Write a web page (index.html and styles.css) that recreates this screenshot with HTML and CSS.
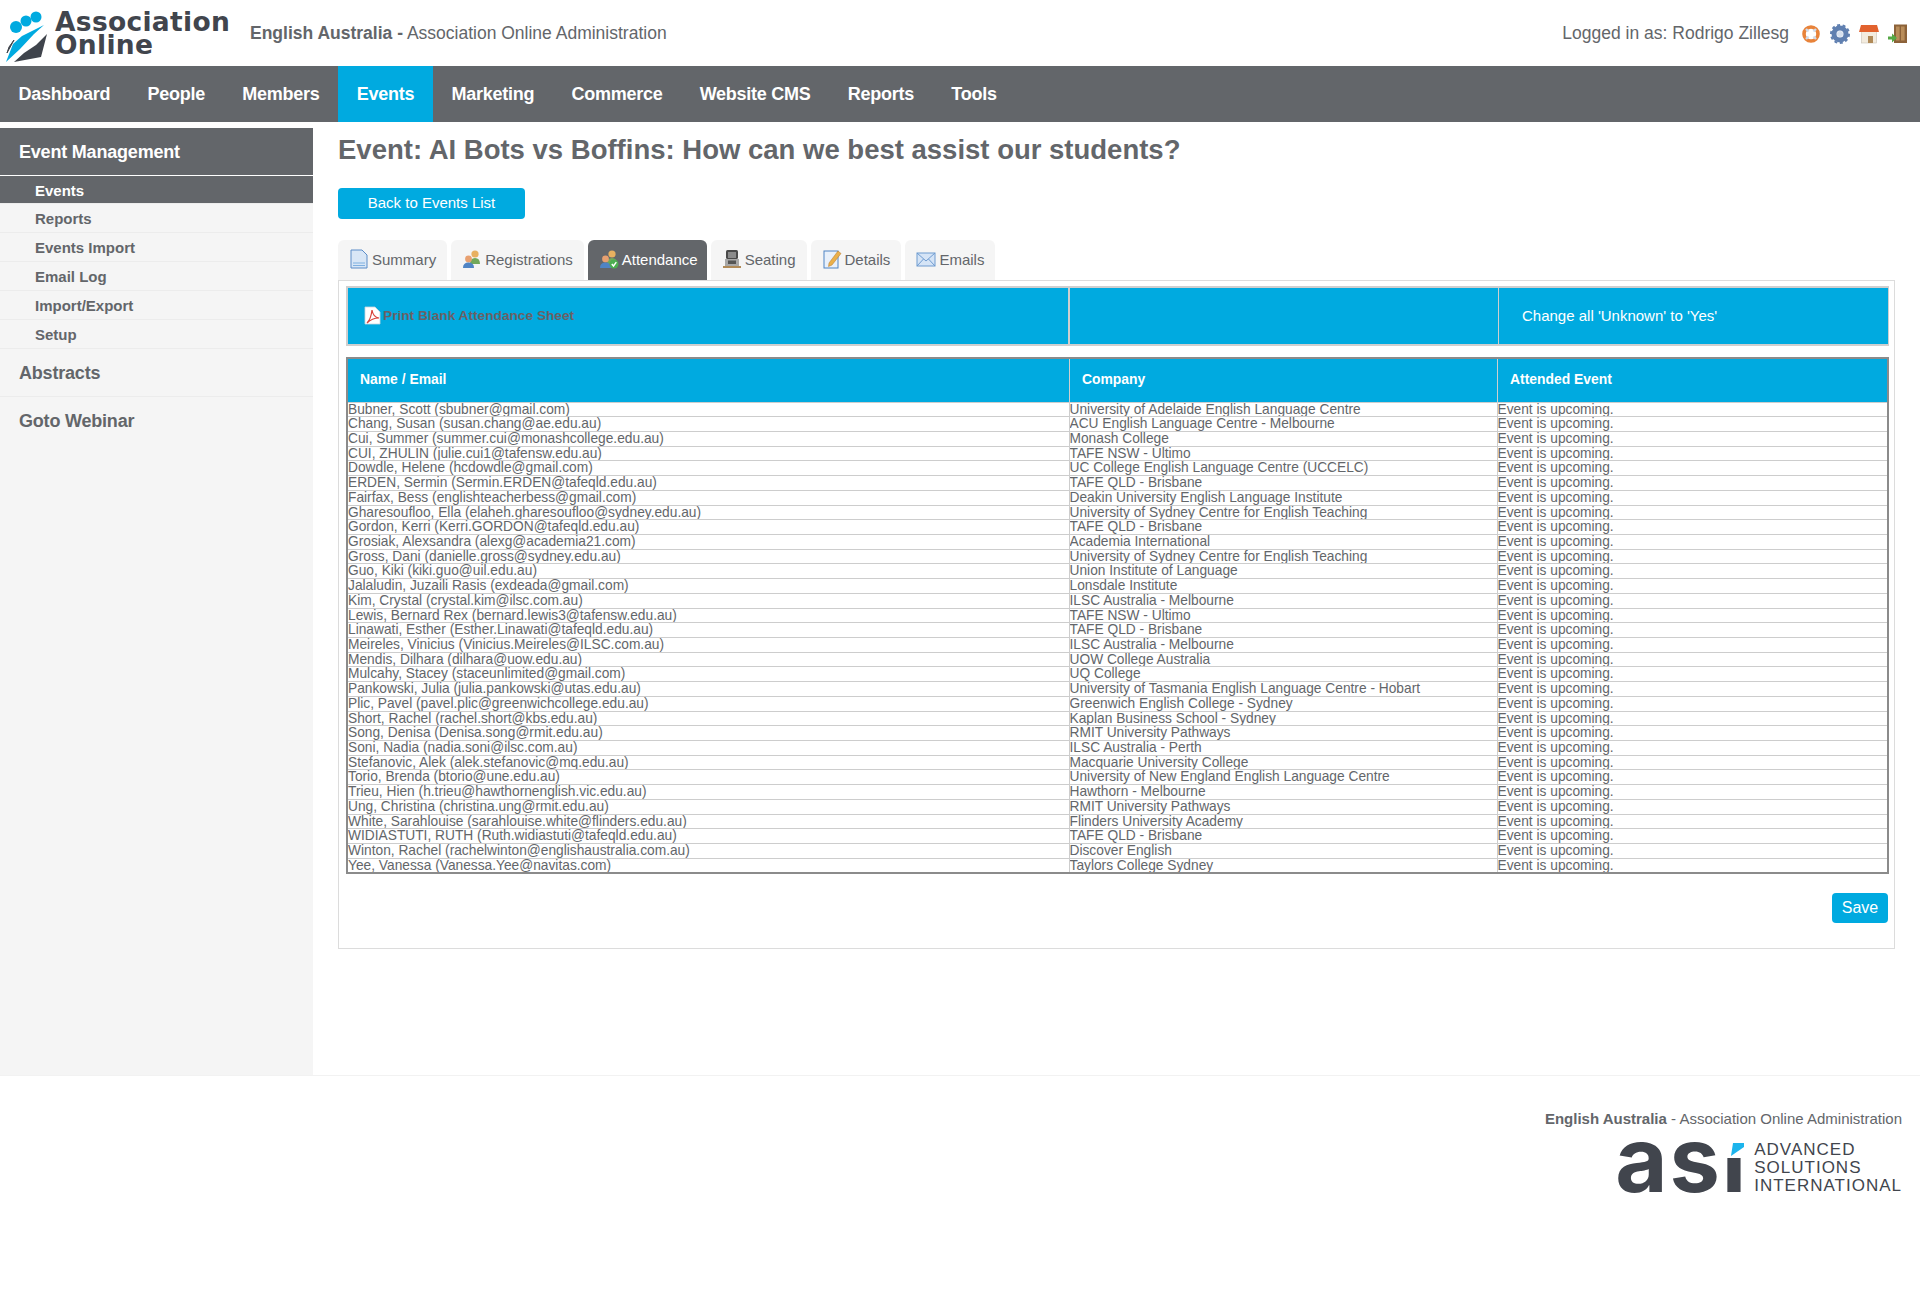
FILE: index.html
```html
<!DOCTYPE html>
<html lang="en">
<head>
    <meta charset="UTF-8">
    <title>Event Attendance</title>
    <link rel="stylesheet" href="styles.css">
</head>
<body>
    <div class="header">
        <div class="logo">
            <svg class="logo-mark" width="48" height="56" viewBox="0 0 48 56">
                <circle cx="16" cy="20" r="6" fill="#00aae0"/>
                <circle cx="26" cy="14" r="5.5" fill="#00aae0"/>
                <circle cx="36" cy="10" r="5.5" fill="#00aae0"/>
                <path d="M44 18 L34 27 L20 42 L6 55 L13 37 L22 29 Z" fill="#00aae0"/>
                <path d="M47 27 L41 50 L14 55 L24 46 L36 38 Z" fill="#3f444c"/>
                <path d="M14 33 L7 46 L9 40 Z" fill="#3f444c" stroke="#3f444c"/>
            </svg>
            <div class="logo-text">Association<br>Online</div>
        </div>
        <div class="site-title"><b>English Australia -</b> Association Online Administration</div>
        <div class="user-area">
            <span class="logged-in">Logged in as: Rodrigo Zillesg</span>
            <svg class="top-icon" width="20" height="20" viewBox="0 0 20 20">
                <circle cx="10" cy="10" r="7" fill="none" stroke="#e8833a" stroke-width="3.6"/>
                <path d="M5 5 L7.5 7.5 M15 5 L12.5 7.5 M5 15 L7.5 12.5 M15 15 L12.5 12.5" stroke="#cfdcec" stroke-width="2.4"/>
            </svg>
            <svg class="top-icon" width="20" height="20" viewBox="0 0 20 20">
                <circle cx="10" cy="10" r="6" fill="none" stroke="#5f7fb0" stroke-width="5"/>
                <circle cx="10" cy="10" r="9" fill="none" stroke="#5f7fb0" stroke-width="2" stroke-dasharray="3 2.6"/>
                <circle cx="10" cy="10" r="3" fill="#d6e0ee"/>
            </svg>
            <svg class="top-icon" width="20" height="20" viewBox="0 0 20 20">
                <rect x="2.5" y="7" width="15" height="12" fill="#f3ecdf" stroke="#c9c2b4" stroke-width=".6"/>
                <path d="M0 8 L2 1 H18 L20 8 Z" fill="#e2622e"/>
                <rect x="9" y="12" width="5" height="7" fill="#b08a58"/>
            </svg>
            <svg class="top-icon" width="20" height="20" viewBox="0 0 20 20">
                <rect x="6" y="0.5" width="13" height="18.5" fill="#8c6239"/>
                <rect x="8" y="2.5" width="3.6" height="14" fill="#b98d5a"/>
                <rect x="13" y="2.5" width="3.6" height="14" fill="#b98d5a"/>
                <path d="M0 12.5 H4 V9.5 L9 14 L4 18.5 V15.5 H0 Z" fill="#55a845"/>
            </svg>
        </div>
    </div>

    <div class="nav">
        <a>Dashboard</a>
        <a>People</a>
        <a>Members</a>
        <a class="active">Events</a>
        <a>Marketing</a>
        <a>Commerce</a>
        <a>Website CMS</a>
        <a>Reports</a>
        <a>Tools</a>
    </div>

    <div class="main">
        <div class="sidebar">
            <div class="side-head">Event Management</div>
            <a class="side-item current">Events</a>
            <a class="side-item">Reports</a>
            <a class="side-item">Events Import</a>
            <a class="side-item">Email Log</a>
            <a class="side-item">Import/Export</a>
            <a class="side-item">Setup</a>
            <div class="side-group">Abstracts</div>
            <div class="side-group">Goto Webinar</div>
        </div>

        <div class="content">
            <h1>Event: AI Bots vs Boffins: How can we best assist our students?</h1>
            <a class="btn btn-back">Back to Events List</a>

            <div class="tabs">
                <a class="tab">
                    <svg width="20" height="20" viewBox="0 0 20 20"><path d="M2 1 H13 L18 6 V19 H2 Z" fill="#d8e6f6" stroke="#5b8cc8"/><path d="M4 14 H16 M4 16.5 H16" stroke="#7fb0e0"/></svg>
                    Summary
                </a>
                <a class="tab">
                    <svg width="20" height="20" viewBox="0 0 20 20"><circle cx="13" cy="5" r="3.6" fill="#e8b060"/><path d="M8 15 Q8 9 13 9 Q18 9 18 15 Z" fill="#72a85a"/><circle cx="6.5" cy="10" r="3.4" fill="#e8a070"/><path d="M1 19 Q1 13.5 6.5 13.5 Q12 13.5 12 19 Z" fill="#4f84c4"/></svg>
                    Registrations
                </a>
                <a class="tab selected">
                    <svg width="20" height="20" viewBox="0 0 20 20"><circle cx="13" cy="5" r="3.6" fill="#e8b060"/><path d="M8 15 Q8 9 13 9 Q18 9 18 15 Z" fill="#72a85a"/><circle cx="6.5" cy="10" r="3.4" fill="#e8a070"/><path d="M1 19 Q1 13.5 6.5 13.5 Q12 13.5 12 19 Z" fill="#4f84c4"/><circle cx="15" cy="15" r="4.5" fill="#4caf50"/><path d="M12.8 15 L14.5 17 L17.3 13.2" fill="none" stroke="#fff" stroke-width="1.4"/></svg>
                    Attendance
                </a>
                <a class="tab">
                    <svg width="20" height="20" viewBox="0 0 20 20"><rect x="4" y="1" width="12" height="9" rx="1.5" fill="#4a4a4a"/><rect x="6" y="3" width="8" height="6" fill="#8b8b8b"/><rect x="3" y="10" width="14" height="7" fill="#a8a8a8"/><rect x="6" y="11.5" width="8" height="3.5" fill="#555"/><rect x="1" y="17" width="18" height="2" fill="#b08a58"/></svg>
                    Seating
                </a>
                <a class="tab">
                    <svg width="20" height="20" viewBox="0 0 20 20"><rect x="2" y="2" width="14" height="17" fill="#e8f0fa" stroke="#4f84c4"/><path d="M7 14 L16 2 L19 4.5 L10 16 L6.5 17.5 Z" fill="#eab04a" stroke="#b5772a" stroke-width=".5"/></svg>
                    Details
                </a>
                <a class="tab">
                    <svg width="20" height="20" viewBox="0 0 20 20"><rect x="1" y="4" width="18" height="13" fill="#d5e4f6" stroke="#6f9bd0"/><path d="M1 4 L10 12 L19 4 M1 17 L7.5 10 M19 17 L12.5 10" fill="none" stroke="#6f9bd0"/></svg>
                    Emails
                </a>
            </div>

            <div class="panel">
                <table class="action-table">
                    <tr>
                        <td class="col-name">
                            <a class="print-link">
                                <svg width="17" height="19" viewBox="0 0 17 19"><path d="M1 1 H11 L16 6 V18 H1 Z" fill="#fff" stroke="#c9d4dd" stroke-width=".8"/><path d="M3 17 Q7 13 8 4 Q9 11 15 12 Q8 12 3 17 Z" fill="none" stroke="#d8433a" stroke-width="1.2"/></svg>
                                Print Blank Attendance Sheet
                            </a>
                        </td>
                        <td class="col-company"></td>
                        <td class="change-all">Change all 'Unknown' to 'Yes'</td>
                    </tr>
                </table>

                <table class="attendance">
                    <thead>
                        <tr>
                            <th class="col-name">Name / Email</th>
                            <th class="col-company">Company</th>
                            <th>Attended Event</th>
                        </tr>
                    </thead>
                    <tbody>
                        <tr><td>Bubner, Scott (sbubner@gmail.com)</td><td>University of Adelaide English Language Centre</td><td>Event is upcoming.</td></tr>
                        <tr><td>Chang, Susan (susan.chang@ae.edu.au)</td><td>ACU English Language Centre - Melbourne</td><td>Event is upcoming.</td></tr>
                        <tr><td>Cui, Summer (summer.cui@monashcollege.edu.au)</td><td>Monash College</td><td>Event is upcoming.</td></tr>
                        <tr><td>CUI, ZHULIN (julie.cui1@tafensw.edu.au)</td><td>TAFE NSW - Ultimo</td><td>Event is upcoming.</td></tr>
                        <tr><td>Dowdle, Helene (hcdowdle@gmail.com)</td><td>UC College English Language Centre (UCCELC)</td><td>Event is upcoming.</td></tr>
                        <tr><td>ERDEN, Sermin (Sermin.ERDEN@tafeqld.edu.au)</td><td>TAFE QLD - Brisbane</td><td>Event is upcoming.</td></tr>
                        <tr><td>Fairfax, Bess (englishteacherbess@gmail.com)</td><td>Deakin University English Language Institute</td><td>Event is upcoming.</td></tr>
                        <tr><td>Gharesoufloo, Ella (elaheh.gharesoufloo@sydney.edu.au)</td><td>University of Sydney Centre for English Teaching</td><td>Event is upcoming.</td></tr>
                        <tr><td>Gordon, Kerri (Kerri.GORDON@tafeqld.edu.au)</td><td>TAFE QLD - Brisbane</td><td>Event is upcoming.</td></tr>
                        <tr><td>Grosiak, Alexsandra (alexg@academia21.com)</td><td>Academia International</td><td>Event is upcoming.</td></tr>
                        <tr><td>Gross, Dani (danielle.gross@sydney.edu.au)</td><td>University of Sydney Centre for English Teaching</td><td>Event is upcoming.</td></tr>
                        <tr><td>Guo, Kiki (kiki.guo@uil.edu.au)</td><td>Union Institute of Language</td><td>Event is upcoming.</td></tr>
                        <tr><td>Jalaludin, Juzaili Rasis (exdeada@gmail.com)</td><td>Lonsdale Institute</td><td>Event is upcoming.</td></tr>
                        <tr><td>Kim, Crystal (crystal.kim@ilsc.com.au)</td><td>ILSC Australia - Melbourne</td><td>Event is upcoming.</td></tr>
                        <tr><td>Lewis, Bernard Rex (bernard.lewis3@tafensw.edu.au)</td><td>TAFE NSW - Ultimo</td><td>Event is upcoming.</td></tr>
                        <tr><td>Linawati, Esther (Esther.Linawati@tafeqld.edu.au)</td><td>TAFE QLD - Brisbane</td><td>Event is upcoming.</td></tr>
                        <tr><td>Meireles, Vinicius (Vinicius.Meireles@ILSC.com.au)</td><td>ILSC Australia - Melbourne</td><td>Event is upcoming.</td></tr>
                        <tr><td>Mendis, Dilhara (dilhara@uow.edu.au)</td><td>UOW College Australia</td><td>Event is upcoming.</td></tr>
                        <tr><td>Mulcahy, Stacey (staceunlimited@gmail.com)</td><td>UQ College</td><td>Event is upcoming.</td></tr>
                        <tr><td>Pankowski, Julia (julia.pankowski@utas.edu.au)</td><td>University of Tasmania English Language Centre - Hobart</td><td>Event is upcoming.</td></tr>
                        <tr><td>Plic, Pavel (pavel.plic@greenwichcollege.edu.au)</td><td>Greenwich English College - Sydney</td><td>Event is upcoming.</td></tr>
                        <tr><td>Short, Rachel (rachel.short@kbs.edu.au)</td><td>Kaplan Business School - Sydney</td><td>Event is upcoming.</td></tr>
                        <tr><td>Song, Denisa (Denisa.song@rmit.edu.au)</td><td>RMIT University Pathways</td><td>Event is upcoming.</td></tr>
                        <tr><td>Soni, Nadia (nadia.soni@ilsc.com.au)</td><td>ILSC Australia - Perth</td><td>Event is upcoming.</td></tr>
                        <tr><td>Stefanovic, Alek (alek.stefanovic@mq.edu.au)</td><td>Macquarie University College</td><td>Event is upcoming.</td></tr>
                        <tr><td>Torio, Brenda (btorio@une.edu.au)</td><td>University of New England English Language Centre</td><td>Event is upcoming.</td></tr>
                        <tr><td>Trieu, Hien (h.trieu@hawthornenglish.vic.edu.au)</td><td>Hawthorn - Melbourne</td><td>Event is upcoming.</td></tr>
                        <tr><td>Ung, Christina (christina.ung@rmit.edu.au)</td><td>RMIT University Pathways</td><td>Event is upcoming.</td></tr>
                        <tr><td>White, Sarahlouise (sarahlouise.white@flinders.edu.au)</td><td>Flinders University Academy</td><td>Event is upcoming.</td></tr>
                        <tr><td>WIDIASTUTI, RUTH (Ruth.widiastuti@tafeqld.edu.au)</td><td>TAFE QLD - Brisbane</td><td>Event is upcoming.</td></tr>
                        <tr><td>Winton, Rachel (rachelwinton@englishaustralia.com.au)</td><td>Discover English</td><td>Event is upcoming.</td></tr>
                        <tr><td>Yee, Vanessa (Vanessa.Yee@navitas.com)</td><td>Taylors College Sydney</td><td>Event is upcoming.</td></tr>
                    </tbody>
                </table>

                <div class="save-row">
                    <a class="btn btn-save">Save</a>
                </div>
            </div>
        </div>
    </div>

    <div class="footer">
        <div class="footer-text"><b>English Australia</b> - Association Online Administration</div>
        <div class="asi">
            <span class="asi-mark">ası<svg class="asi-flag" width="18" height="15" viewBox="0 0 18 15"><rect width="18" height="15" fill="#fff"/><path d="M7 0 H18 V4 L5 13 Z" fill="#1cb4ec"/></svg></span>
            <span class="asi-name">ADVANCED<br>SOLUTIONS<br>INTERNATIONAL</span>
        </div>
    </div>
</body>
</html>
```

FILE: styles.css
```css
body {
    font-family: "Liberation Sans", Arial, sans-serif;
    color: #63666a;
    background-color: white;
    margin: 0;
    font-size: 14px;
}

a {
    cursor: pointer;
}

.header {
    display: flex;
    align-items: center;
    height: 66px;
}

.logo {
    display: flex;
    align-items: center;
    width: 250px;
    box-sizing: border-box;
}

.logo-mark {
    flex: none;
    margin-top: 4px;
}

.logo-text {
    font-family: "DejaVu Sans", sans-serif;
    font-weight: 700;
    font-size: 26.5px;
    line-height: 23px;
    letter-spacing: 0.3px;
    color: #41454d;
    margin: 0 0 0 7px;
}

.site-title {
    font-size: 17.5px;
    color: #63666a;
}

.user-area {
    margin-left: auto;
    display: flex;
    align-items: center;
    padding-right: 12px;
    margin-top: 1px;
}

.logged-in {
    font-size: 17.5px;
    margin-right: 12px;
    margin-top: -1px;
}

.top-icon {
    margin-left: 9px;
}

.logged-in + .top-icon {
    margin-left: 0;
}

.nav {
    display: flex;
    height: 56px;
    background-color: #63666a;
}

.nav a {
    display: flex;
    align-items: center;
    padding: 0 18.6px;
    font-size: 18px;
    font-weight: bold;
    letter-spacing: -0.25px;
    color: white;
}

.nav a.active {
    background-color: #00aae0;
}

.main {
    display: flex;
    height: 953px;
}

.sidebar {
    width: 313px;
    flex: none;
    margin-top: 6px;
    background-color: #f5f5f5;
}

.side-head {
    height: 47px;
    line-height: 48px;
    padding-left: 19px;
    font-size: 18px;
    font-weight: bold;
    letter-spacing: -0.2px;
    background-color: #63666a;
    color: white;
    border-bottom: 1px solid white;
}

.side-item {
    display: block;
    height: 28px;
    line-height: 29px;
    padding-left: 35px;
    font-size: 15px;
    font-weight: bold;
    color: #63666a;
    border-bottom: 1px solid #ececec;
}

.side-item.current {
    height: 27px;
    background-color: #63666a;
    color: white;
}

.side-group {
    height: 47px;
    line-height: 48px;
    padding-left: 19px;
    font-size: 18px;
    font-weight: bold;
    letter-spacing: -0.2px;
    border-bottom: 1px solid #ececec;
}

.side-group:last-child {
    border-bottom: none;
}

.content {
    flex: 1;
    padding: 0 25px;
    min-width: 0;
}

h1 {
    margin: 12px 0 0 0;
    font-size: 27.5px;
    line-height: 32px;
    font-weight: bold;
    color: #63666a;
}

.btn {
    display: inline-block;
    background-color: #00aae0;
    color: white;
    border-radius: 4px;
    text-align: center;
}

.btn-back {
    width: 187px;
    height: 31px;
    line-height: 30px;
    font-size: 15px;
    margin-top: 22px;
}

.tabs {
    display: flex;
    gap: 4px;
    margin-top: 21px;
}

.tab {
    display: flex;
    align-items: center;
    gap: 3px;
    height: 38px;
    padding: 0 11px 2px 11px;
    background-color: #f5f5f5;
    border-radius: 6px 6px 0 0;
    font-size: 15px;
}

.tab svg {
    flex: none;
}

.tab.selected {
    background-color: #63666a;
    color: white;
    padding-right: 9px;
}

.panel {
    border: 1px solid #dcdcdc;
    padding: 5px 6px 25px 7px;
    box-sizing: border-box;
    height: 669px;
}

table {
    width: 1543px;
    border-collapse: collapse;
    table-layout: fixed;
}

.col-name {
    width: 720px;
}

.col-company {
    width: 428px;
}

.action-table td {
    height: 54px;
    background-color: #00aae0;
    border: 2px solid #cfcfcf;
    padding: 0 0 2px 0;
}

.action-table td + td {
    border-width: 2px 1px;
}

.print-link {
    display: flex;
    align-items: center;
    gap: 2px;
    padding-left: 16px;
    font-weight: bold;
    font-size: 13.7px;
    color: #6b6065;
}

.action-table .change-all {
    padding-left: 23px;
    font-size: 15px;
    color: white;
}

.attendance {
    margin-top: 11px;
    border: 2px solid #8b8b8b;
}

.attendance .col-name {
    width: 722px;
}

.attendance th {
    box-sizing: border-box;
    height: 44px;
    padding: 0 0 2px 12.5px;
    background-color: #00aae0;
    color: white;
    font-size: 13.9px;
    text-align: left;
    border-left: 1px solid #cfcfcf;
}

.attendance th:first-child {
    border-left: none;
    padding-left: 12px;
}

.attendance td {
    height: 14.72px;
    line-height: 13.7px;
    padding: 0;
    font-size: 13.75px;
    white-space: nowrap;
    overflow: hidden;
    border: 1px solid #cdcdcd;
    box-sizing: border-box;
}

.save-row {
    display: flex;
    justify-content: flex-end;
    margin-top: 19px;
}

.btn-save {
    width: 56px;
    height: 30px;
    line-height: 30px;
    font-size: 16px;
}

.footer {
    border-top: 1px solid #f2f2f2;
    padding: 34px 18px 0 0;
    text-align: right;
    height: 150px;
    box-sizing: border-box;
}

.footer-text {
    font-size: 15px;
    line-height: 18px;
}

.asi {
    display: flex;
    justify-content: flex-end;
    align-items: center;
    margin-top: 6px;
}

.asi-mark {
    position: relative;
    font-family: Inter, sans-serif;
    font-weight: 700;
    font-size: 90px;
    line-height: 52px;
    letter-spacing: 2px;
    color: #41454d;
    margin: 0 6px 16px 0;
}

.asi-flag {
    position: absolute;
    right: 4px;
    top: 9px;
}

.asi-name {
    font-size: 17px;
    line-height: 18.3px;
    letter-spacing: 1px;
    text-align: left;
    color: #41454d;
}
```
